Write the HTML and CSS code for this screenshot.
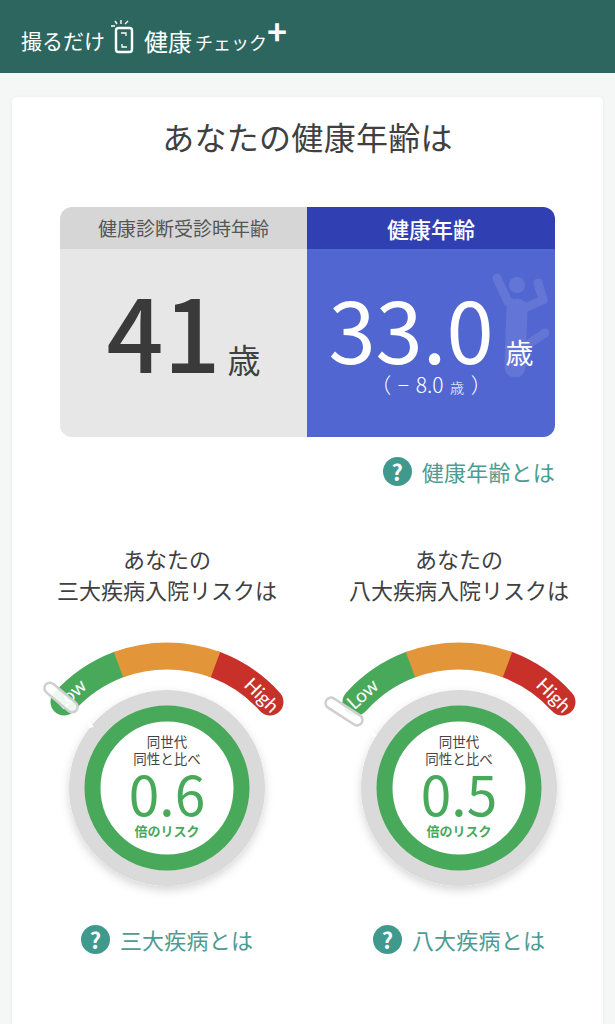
FILE: index.html
```html
<!DOCTYPE html>
<html lang="ja">

<head>
  <meta charset="UTF-8">
  <title>撮るだけ健康チェック+</title>
  <link rel="stylesheet" href="styles.css">
</head>

<body>
  <header class="topbar">
    <div class="logo">
      <span class="logo-main">撮るだけ</span>
      <svg class="logo-icon" width="24" height="34" viewBox="0 0 24 34" fill="none" stroke="#fff">
        <rect x="5" y="8" width="16" height="24" rx="2.5" stroke-width="2.4"/>
        <path d="M10 13h5v3M16 27h-5v-3" stroke-width="1.3"/>
        <path d="M0 6h4M4 1l2 3M10 0v4M17 1l-3 3" stroke-width="1.4"/>
      </svg>
      <span class="logo-big">健康</span>
      <span class="logo-small">チェック</span>
      <span class="logo-plus">+</span>
    </div>
  </header>

  <main class="card">
    <h1 class="title">あなたの健康年齢は</h1>

    <section class="age-box">
      <div class="age-col age-actual">
        <div class="age-head">健康診断受診時年齢</div>
        <div class="age-body">
          <div class="age-value"><span class="num-big">41</span><span class="unit">歳</span></div>
        </div>
      </div>
      <div class="age-col age-health">
        <div class="age-head">健康年齢</div>
        <div class="age-body">
          <svg class="runner" width="60" height="106" viewBox="0 0 60 106" fill="none" stroke="#fff" stroke-linecap="round" stroke-linejoin="round">
            <circle cx="28" cy="14" r="8" fill="#fff" stroke="none"/>
            <path d="M8 7l11 24 19 5 16-7-5-17" stroke-width="9"/>
            <path d="M28 38l-2 58" stroke-width="21"/>
            <path d="M41 72l15-10" stroke-width="9"/>
          </svg>
          <div class="age-value age-value-mid"><span class="num-mid">33.0</span><span class="unit unit-light">歳</span></div>
          <div class="age-diff">（ − 8.0 <small>歳</small> ）</div>
        </div>
      </div>
    </section>

    <div class="help-row help-right">
      <a class="help"><span class="help-mark">?</span>健康年齢とは</a>
    </div>

    <section class="risks">
      <div class="risk">
        <h2 class="risk-title">あなたの<br>三大疾病入院リスクは</h2>
        <svg class="gauge" width="250" height="260" viewBox="0 0 250 260">
          <defs>
            <filter id="soft" x="-20%" y="-20%" width="140%" height="140%">
              <feDropShadow dx="0" dy="4" stdDeviation="5" flood-color="#000" flood-opacity="0.16"/>
            </filter>
          </defs>
          <path class="arc arc-low" d="M22 63A139 139 0 0 1 76.5 25.7"/>
          <path class="arc arc-high" d="M173.5 25.7A139 139 0 0 1 228 63"/>
          <path class="arc arc-mid" d="M76.5 25.7A139 139 0 0 1 173.5 25.7"/>
          <text class="arc-label" transform="translate(33 60) rotate(-42)">Low</text>
          <text class="arc-label" transform="translate(215 61) rotate(45)">High</text>
          <circle cx="125" cy="149" r="98" fill="#dadada" filter="url(#soft)"/>
          <path d="M44 78l8 10-5 1z" fill="#fff"/>
          <circle cx="125" cy="149" r="74.5" fill="#fff" stroke="#48a95a" stroke-width="16"/>
          <rect class="marker" x="-20" y="-5.5" width="40" height="11" rx="5.5" transform="translate(19 58.5) rotate(40)"/>
          <text class="g-note" x="125" y="108">同世代</text>
          <text class="g-note" x="125" y="125">同性と比べ</text>
          <text class="g-num" x="125" y="177">0.6</text>
          <text class="g-rate" x="125" y="197">倍のリスク</text>
        </svg>
        <a class="help"><span class="help-mark">?</span>三大疾病とは</a>
      </div>

      <div class="risk">
        <h2 class="risk-title">あなたの<br>八大疾病入院リスクは</h2>
        <svg class="gauge" width="250" height="260" viewBox="0 0 250 260">
          <path class="arc arc-low" d="M22 63A139 139 0 0 1 76.5 25.7"/>
          <path class="arc arc-high" d="M173.5 25.7A139 139 0 0 1 228 63"/>
          <path class="arc arc-mid" d="M76.5 25.7A139 139 0 0 1 173.5 25.7"/>
          <text class="arc-label" transform="translate(33 60) rotate(-42)">Low</text>
          <text class="arc-label" transform="translate(215 61) rotate(45)">High</text>
          <circle cx="125" cy="149" r="98" fill="#dadada" filter="url(#soft)"/>
          <path d="M36 90l7 7-4 1z" fill="#fff"/>
          <circle cx="125" cy="149" r="74.5" fill="#fff" stroke="#48a95a" stroke-width="16"/>
          <rect class="marker" x="-21" y="-5.5" width="42" height="11" rx="5.5" transform="translate(10 72.5) rotate(33)"/>
          <text class="g-note" x="125" y="108">同世代</text>
          <text class="g-note" x="125" y="125">同性と比べ</text>
          <text class="g-num" x="125" y="177">0.5</text>
          <text class="g-rate" x="125" y="197">倍のリスク</text>
        </svg>
        <a class="help"><span class="help-mark">?</span>八大疾病とは</a>
      </div>
    </section>
  </main>
</body>

</html>
```

FILE: styles.css
```css
html,
body {
    height: 1024px;
    margin: 0;
    padding: 0;
    overflow: hidden;
}

body {
    background-color: #f5f6f6;
    font-family: "Noto Sans CJK JP", "Noto Sans", sans-serif;
    color: #404040;
}

.topbar {
    display: flex;
    align-items: center;
    height: 73px;
    padding-left: 21px;
    box-sizing: border-box;
    background-color: #2c665f;
}

.logo {
    display: flex;
    align-items: center;
    color: #fff;
    line-height: 1;
}

.logo-main {
    font-size: 21px;
    margin-top: 8px;
}

.logo-icon {
    margin: 0 9px 0 6px;
}

.logo-big {
    font-size: 24px;
    margin-top: 8px;
}

.logo-small {
    font-size: 18px;
    margin-top: 10px;
    margin-left: 3px;
}

.logo-plus {
    font-size: 34px;
    font-weight: 700;
    margin-top: -12px;
}

.card {
    height: 960px;
    margin: 24px 12px 0;
    background-color: #fff;
    border-radius: 5px;
    box-shadow: 0 0 4px rgba(0, 0, 0, 0.05);
    overflow: hidden;
}

.title {
    margin: 0;
    padding-top: 18px;
    font-size: 32px;
    font-weight: 400;
    letter-spacing: 0.3px;
    line-height: 42px;
    text-align: center;
}

.age-box {
    display: grid;
    grid-template-columns: 247px 248px;
    height: 230px;
    margin: 50px 48px 0;
    border-radius: 12px;
    overflow: hidden;
}

.age-col {
    display: flex;
    flex-direction: column;
}

.age-head {
    height: 42px;
    line-height: 42px;
    text-align: center;
}

.age-body {
    position: relative;
    flex: 1;
    text-align: center;
}

.age-actual .age-head {
    background-color: #d6d6d6;
    color: #555;
    font-size: 19px;
}

.age-actual .age-body {
    background-color: #e7e7e7;
}

.age-health .age-head {
    background-color: #303fb1;
    color: #fff;
    font-size: 22px;
    font-weight: 500;
}

.age-health .age-body {
    background-color: #5166d1;
    color: #fff;
}

.age-value {
    display: flex;
    align-items: baseline;
    justify-content: center;
    padding-top: 8px;
}

.age-value-mid {
    padding-top: 17px;
}

.num-big {
    font-size: 100px;
    font-weight: 500;
    line-height: 146px;
    color: #3a3a3a;
}

.num-mid {
    font-size: 85px;
    line-height: 122px;
}

.unit {
    margin-left: 7px;
    font-size: 33px;
}

.unit-light {
    margin-left: 12px;
    font-size: 28px;
}

.age-diff {
    margin-top: -18px;
    font-size: 21px;
    word-spacing: 2px;
    line-height: 28px;
    font-weight: 300;
}

.age-diff small {
    font-size: 14px;
}

.runner {
    position: absolute;
    top: 22px;
    right: 6px;
    opacity: 0.1;
}

.help-row {
    display: flex;
    margin-top: 16px;
    padding-right: 48px;
}

.help-right {
    justify-content: flex-end;
}

.help {
    display: inline-flex;
    align-items: center;
    gap: 10px;
    color: #4c9c91;
    font-size: 22px;
    letter-spacing: 0.2px;
    line-height: 36px;
}

.help-mark {
    width: 29px;
    height: 29px;
    border-radius: 50%;
    background-color: #3f9a8d;
    color: #fff;
    font-size: 22px;
    font-weight: 700;
    line-height: 29px;
    text-align: center;
}

.risks {
    display: flex;
    gap: 42px;
    margin-top: 54px;
    padding-left: 30px;
}

.risk {
    display: flex;
    flex-direction: column;
    align-items: center;
    width: 250px;
}

.risk-title {
    margin: 0;
    font-size: 22px;
    font-weight: 400;
    line-height: 31px;
    text-align: center;
    white-space: nowrap;
}

.gauge {
    margin-top: 34px;
    overflow: visible;
}

.risk .help {
    margin-top: 22px;
}

.arc {
    fill: none;
    stroke-width: 27;
}

.arc-low {
    stroke: #48a95a;
    stroke-linecap: round;
}

.arc-high {
    stroke: #c8312a;
    stroke-linecap: round;
}

.arc-mid {
    stroke: #e3953a;
}

.arc-label {
    fill: #fff;
    font-family: Lato, sans-serif;
    font-size: 19px;
    text-anchor: middle;
}

.marker {
    fill: #fff;
    fill-opacity: 0.9;
    stroke: #cfcfcf;
    stroke-width: 2.5;
}

.g-note {
    fill: #444;
    font-size: 13.5px;
    text-anchor: middle;
}

.g-num {
    fill: #48a95a;
    font-size: 55px;
    text-anchor: middle;
}

.g-rate {
    fill: #48a95a;
    font-size: 13px;
    font-weight: 700;
    text-anchor: middle;
}
```
